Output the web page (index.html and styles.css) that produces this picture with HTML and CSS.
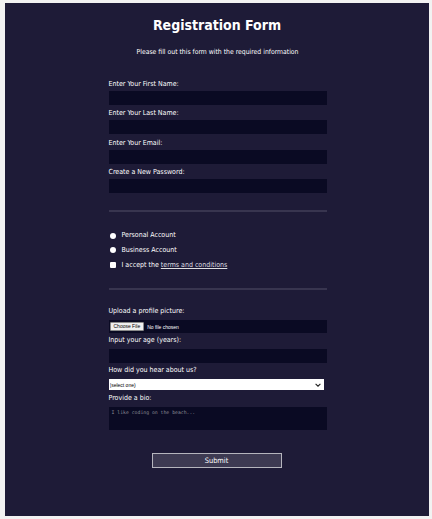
FILE: index.html
```html
<!DOCTYPE html>
<html lang="en">
<head>
<meta charset="utf-8">
<title>Registration Form</title>
<link rel="stylesheet" href="styles.css">
</head>
<body>
<main class="page">
  <h1 class="title">Registration Form</h1>
  <p class="subtitle">Please fill out this form with the required information</p>
  <form class="form">
    <fieldset class="group group-basic">
      <div class="field"><label class="label" for="first">Enter Your First Name:</label><input class="text" id="first" type="text"></div>
      <div class="field"><label class="label" for="last">Enter Your Last Name:</label><input class="text" id="last" type="text"></div>
      <div class="field"><label class="label" for="email">Enter Your Email:</label><input class="text" id="email" type="email"></div>
      <div class="field"><label class="label" for="pw">Create a New Password:</label><input class="text" id="pw" type="password"></div>
    </fieldset>
    <fieldset class="group group-choice">
      <label class="choice"><input class="radio" type="radio" name="acc"> Personal Account</label>
      <label class="choice"><input class="radio" type="radio" name="acc"> Business Account</label>
      <label class="choice"><input class="check" type="checkbox"> I accept the <a class="terms" href="#">terms and conditions</a></label>
    </fieldset>
    <fieldset class="group group-extra">
      <div class="field"><label class="label" for="pic">Upload a profile picture:</label><input class="file" id="pic" type="file"></div>
      <div class="field"><label class="label" for="age">Input your age (years):</label><input class="text" id="age" type="number"></div>
      <div class="field"><label class="label" for="ref">How did you hear about us?</label>
        <div class="select-wrap">
          <select class="select" id="ref"><option>(select one)</option><option>freeCodeCamp News</option></select>
          <svg class="chev" viewBox="0 0 10 6" width="6" height="4"><path d="M1 1 L5 5 L9 1" fill="none" stroke="#222" stroke-width="1.8"/></svg>
        </div>
      </div>
      <div class="field"><label class="label" for="bio">Provide a bio:</label><textarea class="bio" id="bio" placeholder="I like coding on the beach..."></textarea></div>
    </fieldset>
    <input class="submit" type="submit" value="Submit">
  </form>
</main>
</body>
</html>
```
FILE: styles.css
```css
* { box-sizing: border-box; }
html, body { margin: 0; height: 100%; }
body {
  background: #f2f2f2;
  padding: 3px 3px 3px 5px;
  font-family: "DejaVu Sans Condensed", "DejaVu Sans", sans-serif;
  font-stretch: condensed;
  color: #fff;
}
.page {
  background: #1e1b37;
  height: 100%;
  padding-top: 13px;
}
.title {
  margin: 0;
  text-align: center;
  font-size: 14px;
  line-height: 18px;
  font-weight: bold;
}
.subtitle {
  margin: 14px 0 0;
  text-align: center;
  font-size: 6.8px;
  line-height: 9px;
  padding-left: 1px;
}
.form {
  width: 219px;
  margin: 22px auto 0;
  padding-left: 1px;
}
.group {
  border: none;
  margin: 0;
  padding: 0;
  min-width: 0;
  border-bottom: 2px solid #38354f;
}
.group-basic { padding-bottom: 14px; }
.group-choice {
  padding: 19px 0 18px;
  display: flex;
  flex-direction: column;
  gap: 5.8px;
}
.group-extra { border-bottom: none; padding-top: 16px; }
.field { display: flex; flex-direction: column; margin-bottom: 3.3px; }
.group-extra .field { margin-bottom: 2.3px; }
.label {
  font-size: 7px;
  line-height: 10px;
  height: 10px;
  margin-bottom: 2px;
}
.group-extra .label { margin-bottom: 4px; }
.text {
  display: block;
  height: 14px;
  width: 100%;
  margin: 0;
  background: #0a0a23;
  border: 1px solid #0a0a23;
  color: #fff;
  outline: none;
}
.choice {
  display: flex;
  align-items: center;
  font-size: 7px;
  line-height: 9px;
  white-space: pre;
}
.radio, .check {
  appearance: none;
  margin: 0 4px 0 1px;
  width: 6px;
  height: 6px;
  background: #fff;
  flex: none;
}
.radio { border-radius: 50%; }
.check { border-radius: 1px; }
.terms { color: #dfdfe2; text-decoration: underline; }
.file {
  display: block;
  height: 13px;
  width: 100%;
  margin: 0;
  background: #0a0a23;
  border: 1px solid #0a0a23;
  color: #fff;
  font-size: 5px;
  font-family: "Liberation Sans", sans-serif;
  padding: 1px 0 0 0;
}
.file::file-selector-button {
  font-size: 5px;
  font-family: "Liberation Sans", sans-serif;
  height: 9px;
  padding: 0 3px;
  margin: 0 3px 0 0;
  background: #efefef;
  color: #000;
  border: 1px solid #8a8a8a;
  border-radius: 1px;
}
.select-wrap { position: relative; width: 215px; height: 11px; }
.select {
  display: block;
  appearance: none;
  width: 100%;
  height: 11px;
  margin: 0;
  background: #fff;
  border: none;
  border-radius: 0;
  font-size: 5px;
  font-family: "Liberation Sans", sans-serif;
  color: #000;
  padding: 0 0 0 1px;
}
.chev { position: absolute; right: 3px; top: 4px; }
.bio {
  display: block;
  width: 100%;
  height: 23px;
  margin: 0;
  background: #0a0a23;
  border: 1px solid #0a0a23;
  color: #fff;
  resize: none;
  font-family: "DejaVu Sans Mono", monospace;
  font-size: 4.8px;
  padding: 2px;
}
.bio::placeholder { color: #8a8a95; }
.submit {
  display: block;
  width: 130px;
  height: 15px;
  margin: 21px 0 0 43px;
  background: #3d3a52;
  border: 1px solid #b5b5bd;
  color: #fff;
  font-size: 7.4px;
  font-family: "DejaVu Sans Condensed", "DejaVu Sans", sans-serif;
  font-stretch: condensed;
  padding: 0;
}
```
